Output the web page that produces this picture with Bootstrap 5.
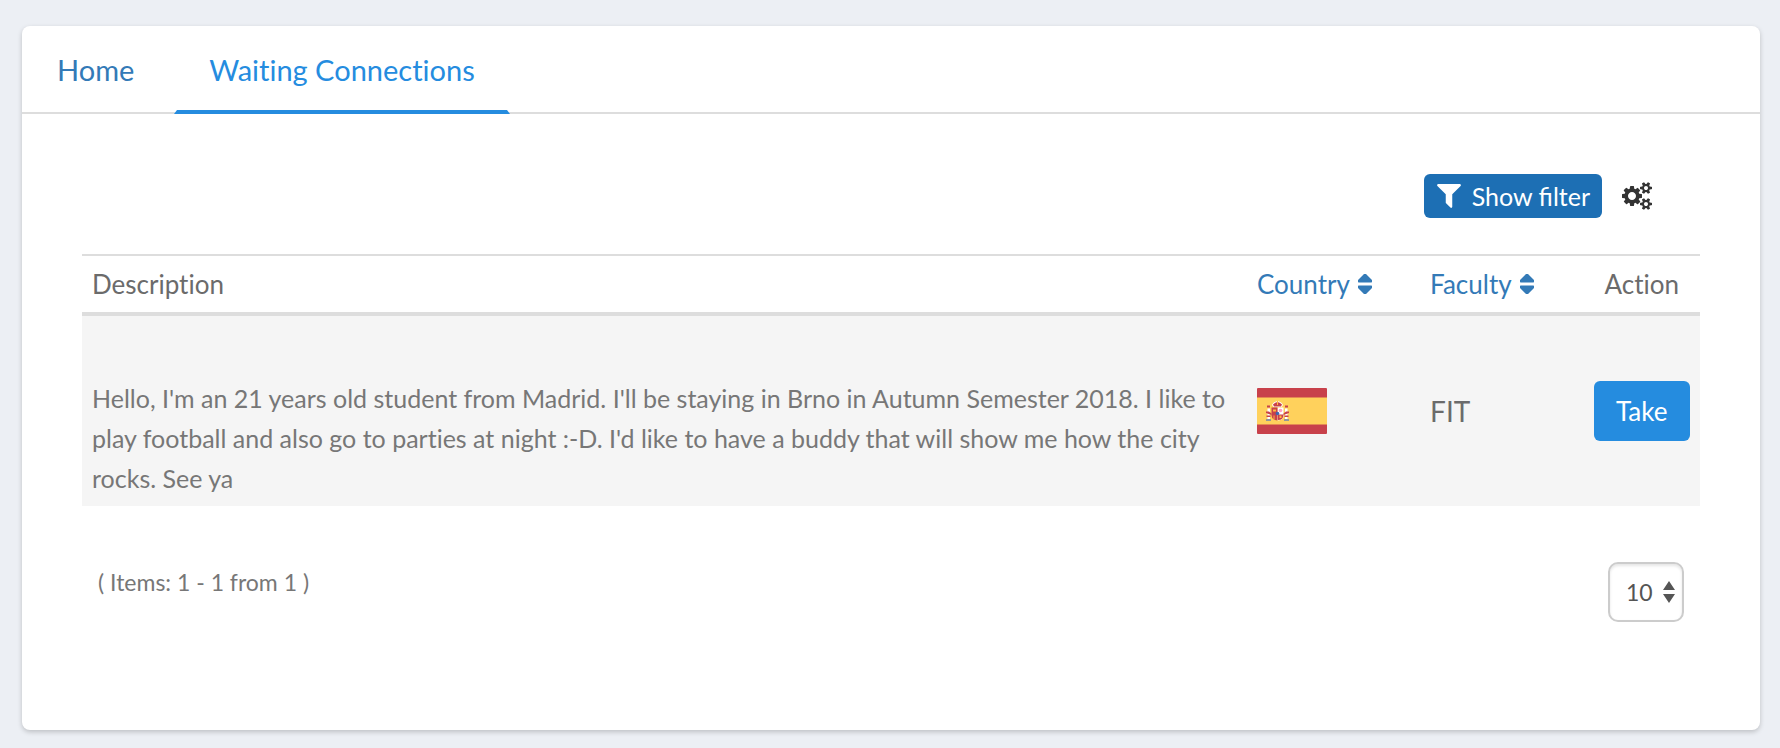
<!DOCTYPE html>
<html lang="en">
<head>
<meta charset="utf-8">
<meta name="viewport" content="width=device-width, initial-scale=1">
<title>Waiting Connections</title>
<link href="https://cdn.jsdelivr.net/npm/bootstrap@5.3.0/dist/css/bootstrap.min.css" rel="stylesheet">
<style>
  body { background: #eceff4; color: #6b6b6b; font-family: Lato, "Open Sans", sans-serif; font-size: 25px; line-height: 40px; font-variant-ligatures: none; }
  .page { padding: 26px 20px 18px 22px; }
  .panel { background: #fff; border-radius: 8px; box-shadow: 0 2px 5px rgba(0,0,0,.2); }
  .tabs { border-bottom: 2px solid #ddd; gap: 5px; }
  .tabs .nav-link { color: #337ab7; font-size: 29px; line-height: 40px; padding: 24px 32px; margin-bottom: -2px; border-bottom: 4px solid transparent; border-left: 3px solid transparent; border-right: 3px solid transparent; height: 88px; }
  .tabs .nav-link.active { color: #258cdf; border-bottom-color: #258cdf; }
  .grid-area { padding: 60px 60px 108px; }
  .toolbar { gap: 20px; padding: 0 48px 36px 0; }
  .btn-filter { background: #1d6fb4; border: 0; color: #fff; font-size: 25px; line-height: 28px; padding: 8px 12px; border-radius: 6px; gap: 10px; }
  .btn-gear { color: #333; padding: 0; border: 0; line-height: 1; }
  .grid { table-layout: fixed; }
  .grid th { font-size: 26px; font-weight: 400; color: #6b6b6b; padding: 8px 10px; border-top: 2px solid #ddd; border-bottom: 4px solid #ddd; }
  .grid td { padding: 8px 10px; background: #f5f5f5; border: 0; color: #6b6b6b; }
  .grid p { margin: 54px 0 0; color: #777; }
  .grid a { color: #337ab7; gap: 8px; }
  .grid .faculty { font-size: 28px; }
  .btn-take { background: #258cdf; border: 0; color: #fff; font-size: 26px; line-height: 36px; padding: 12px 8px; border-radius: 6px; }
  .pager { color: #777; padding: 56px 16px 0; font-size: 23px; }
  .size-select { width: 76px; height: 60px; border: 2px solid #ccc; border-radius: 10px; background: #fff; box-shadow: inset 0 2px 3px rgba(0,0,0,.1); color: #555; font-size: 23px; padding: 0 16px; appearance: none; }
  .size-arrows { right: 9px; top: 18px; pointer-events: none; }
</style>
</head>
<body>
<main class="page">
  <section class="panel">
    <nav class="nav tabs">
      <a class="nav-link" href="#">Home</a>
      <a class="nav-link active" href="#" aria-current="page">Waiting Connections</a>
    </nav>
    <div class="grid-area">
      <div class="d-flex justify-content-end align-items-center toolbar">
        <button type="button" class="btn btn-filter d-flex align-items-center">
          <svg width="26" height="26" viewBox="192 192 1408 1536" fill="currentColor" aria-hidden="true"><path d="M1595 295q17 41-14 70l-493 493v742q0 42-39 59-13 5-25 5-27 0-45-19l-256-256q-19-19-19-45v-486l-493-493q-31-29-14-70 17-39 59-39h1280q42 0 59 39z"/></svg>
          <span>Show filter</span>
        </button>
        <button type="button" class="btn btn-gear" aria-label="Settings">
          <svg width="30" height="28" viewBox="-64 0 1920 1792" fill="currentColor" aria-hidden="true"><path d="M832 896q0-106-75-181t-181-75-181 75-75 181 75 181 181 75 181-75 75-181zm768 512q0-52-38-90t-90-38-90 38-38 90q0 53 37.5 90.5t90.5 37.5 90.5-37.5 37.5-90.5zm0-1024q0-52-38-90t-90-38-90 38-38 90q0 53 37.5 90.5t90.5 37.5 90.5-37.5 37.5-90.5zm-384 421v185q0 10-7 19.5t-16 10.5l-155 24q-11 35-32 76 34 48 90 115 7 11 7 20 0 12-7 19-23 30-82.5 89.5t-78.5 59.5q-11 0-21-7l-115-90q-37 19-77 31-11 108-23 155-7 24-30 24h-186q-11 0-20-7.5t-10-17.5l-23-153q-34-10-75-31l-118 89q-7 7-20 7-11 0-21-8-144-133-144-160 0-9 7-19 10-14 41-53t47-61q-23-44-35-82l-152-24q-10-1-17-9.5t-7-19.5v-185q0-10 7-19.5t16-10.5l155-24q11-35 32-76-34-48-90-115-7-11-7-20 0-12 7-20 22-30 82-89t79-59q11 0 21 7l115 90q34-18 77-32 11-108 23-154 7-24 30-24h186q11 0 20 7.5t10 17.5l23 153q34 10 75 31l118-89q8-7 20-7 11 0 21 8 144 133 144 160 0 8-7 19-12 16-42 54t-45 60q23 48 34 82l152 23q10 2 17 10.5t7 19.5zm640 533v140q0 16-149 31-12 27-30 52 51 113 51 138 0 4-4 7-122 71-124 71-8 0-46-47t-52-68q-20 2-30 2t-30-2q-14 21-52 68t-46 47q-2 0-124-71-4-3-4-7 0-25 51-138-18-25-30-52-149-15-149-31v-140q0-16 149-31 13-29 30-52-51-113-51-138 0-4 4-7 4-2 35-20t59-34 30-16q8 0 46 46.5t52 67.5q20-2 30-2t30 2q51-71 92-112l6-2q4 0 124 70 4 3 4 7 0 25-51 138 17 23 30 52 149 15 149 31zm0-1024v140q0 16-149 31-12 27-30 52 51 113 51 138 0 4-4 7-122 71-124 71-8 0-46-47t-52-68q-20 2-30 2t-30-2q-14 21-52 68t-46 47q-2 0-124-71-4-3-4-7 0-25 51-138-18-25-30-52-149-15-149-31v-140q0-16 149-31 13-29 30-52-51-113-51-138 0-4 4-7 4-2 35-20t59-34 30-16q8 0 46 46.5t52 67.5q20-2 30-2t30 2q51-71 92-112l6-2q4 0 124 70 4 3 4 7 0 25-51 138 17 23 30 52 149 15 149 31z"/></svg>
        </button>
      </div>
      <table class="table grid align-middle mb-0">
        <colgroup><col style="width:72%"><col style="width:10.7%"><col style="width:10.1%"><col style="width:7.2%"></colgroup>
        <thead>
          <tr>
            <th scope="col">Description</th>
            <th scope="col"><a href="#" class="d-inline-flex align-items-center text-decoration-none">Country
              <svg width="14" height="20" viewBox="0 0 14 20" fill="currentColor" aria-hidden="true"><path d="M6 0h2l6 6v2l-.5.5H.5L0 8V6zM.5 11.500h13l.5.500v2L8 20H6L0 14v-2z"/></svg></a></th>
            <th scope="col"><a href="#" class="d-inline-flex align-items-center text-decoration-none">Faculty
              <svg width="14" height="20" viewBox="0 0 14 20" fill="currentColor" aria-hidden="true"><path d="M6 0h2l6 6v2l-.5.5H.5L0 8V6zM.5 11.500h13l.5.500v2L8 20H6L0 14v-2z"/></svg></a></th>
            <th scope="col" class="text-center">Action</th>
          </tr>
        </thead>
        <tbody>
          <tr>
            <td><p>Hello, I'm an 21 years old student from Madrid. I'll be staying in Brno in Autumn Semester 2018. I like to play football and also go to parties at night :-D. I'd like to have a buddy that will show me how the city rocks. See ya</p></td>
            <td>
              <svg class="d-block" width="70" height="46" viewBox="0 0 70 46" role="img" aria-label="Spain">
                <rect width="70" height="46" rx="1" fill="#c8414b"/><rect y="9.500" width="70" height="27" fill="#ffd15c"/>
                <path d="M15 17q1-3 5.500-4 4.500 1 5.500 4l-1.500 2h-8zM20.500 19.500h6v9q-1 4-6 4z" fill="#fff"/>
                <g fill="#c8414b"><path d="M16 16.500q4.500-5 9 0l-1 2h-7z"/><path d="M10 17.500h3v2h-3zM28 17.500h3v2h-3z"/><path d="M14.500 19.500h6v6.500h-6zM14.500 26h6v6.500q-5.500-.500-6-5zM21 26.500h5.500q0 5.500-5.500 5.500z"/></g>
                <path d="M10.500 20.500h2.500V31h-2.500zM28 20.500h2.500V31H28z" fill="#fff"/>
                <path d="M9 23.500h3l2.500 2V27L9 25zM32 23.500h-3l-2.500 2V27l5.500-2zM9.500 27.500h4V29h-4zM27.500 27.500h4V29h-4z" fill="#c8414b"/>
                <path d="M16 21.500h3v2h-3zM22.500 27.500h2V30h-2zM16.500 27.500h1v4h-1zM20 13h1v4h-1z" fill="#ffb441"/>
                <circle cx="23.500" cy="22.500" r="1.800" fill="#ff9fc2"/><circle cx="20.500" cy="25.500" r="1.800" fill="#3f66b0"/>
                <path d="M9 31h5v2H9zM27 31h5v2h-5z" fill="#92969c"/>
              </svg>
            </td>
            <td class="faculty">FIT</td>
            <td><button type="button" class="btn btn-take w-100">Take</button></td>
          </tr>
        </tbody>
      </table>
      <div class="d-flex justify-content-between pager">
        <span>( Items: 1 - 1 from 1 )</span>
        <div class="position-relative">
          <select class="size-select d-block" aria-label="Items per page"><option>10</option><option>20</option><option>50</option></select>
          <svg class="size-arrows position-absolute" width="12" height="24" viewBox="0 0 12 24" fill="#555" aria-hidden="true"><path d="M6 1l6 9H0zM0 14h12L6 23z"/></svg>
        </div>
      </div>
    </div>
  </section>
</main>
<script src="https://cdn.jsdelivr.net/npm/bootstrap@5.3.0/dist/js/bootstrap.bundle.min.js"></script>
</body>
</html>
